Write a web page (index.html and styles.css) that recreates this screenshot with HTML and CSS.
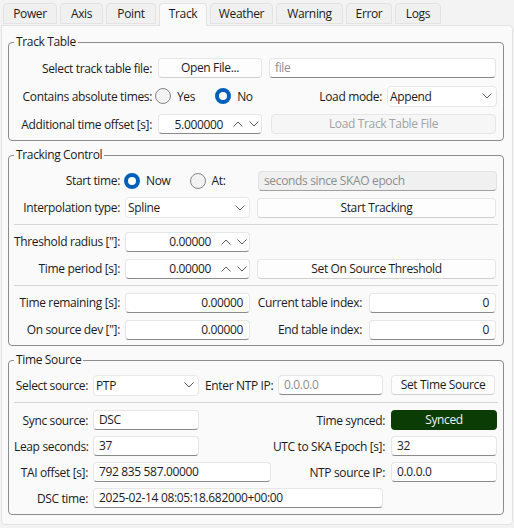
FILE: index.html
```html
<!DOCTYPE html>
<html>
<head>
<meta charset="utf-8">
<link rel="stylesheet" href="styles.css">
</head>
<body>
<div class="tabs">
  <div class="tab">Power</div>
  <div class="tab">Axis</div>
  <div class="tab">Point</div>
  <div class="tab active">Track</div>
  <div class="tab">Weather</div>
  <div class="tab">Warning</div>
  <div class="tab">Error</div>
  <div class="tab">Logs</div>
</div>
<div class="panel">
  <fieldset class="group g-table">
    <legend>Track Table</legend>
    <div class="rows r22">
      <div class="row">
        <span class="lbl w138">Select track table file:</span>
        <span class="btn w104 ml6">Open File...</span>
        <span class="edit ph w227 ml7">file</span>
      </div>
      <div class="row">
        <span class="lbl w138">Contains absolute times:</span>
        <span class="opt ml3"><span class="radio"></span><span>Yes</span></span>
        <span class="opt ml20"><span class="radio on"></span><span>No</span></span>
        <span class="lbl flex">Load mode:</span>
        <span class="combo w110 ml5"><span>Append</span><svg class="chev" width="10" height="6" viewBox="0 0 10 6"><polyline points="0.5,0.5 5,5 9.5,0.5"/></svg></span>
      </div>
      <div class="row">
        <span class="lbl w138">Additional time offset [s]:</span>
        <span class="spin w104 ml6"><span class="val">5.000000</span><span class="arrows"><svg width="10" height="6" viewBox="0 0 10 6"><polyline points="0.5,5.5 5,1 9.5,5.5"/></svg><svg width="10" height="6" viewBox="0 0 10 6"><polyline points="0.5,0.5 5,5 9.5,0.5"/></svg></span></span>
        <span class="btn dis w225 ml9">Load Track Table File</span>
      </div>
    </div>
  </fieldset>

  <fieldset class="group g-ctrl">
    <legend>Tracking Control</legend>
    <div class="rows">
      <div class="row">
        <span class="lbl w106">Start time:</span>
        <span class="opt ml4"><span class="radio on"></span><span>Now</span></span>
        <span class="opt ml19"><span class="radio"></span><span>At:</span></span>
        <span class="flex"></span>
        <span class="edit dis w239">seconds since SKAO epoch</span>
      </div>
      <div class="row">
        <span class="lbl w106">Interpolation type:</span>
        <span class="combo w125 ml5"><span>Spline</span><svg class="chev" width="10" height="6" viewBox="0 0 10 6"><polyline points="0.5,0.5 5,5 9.5,0.5"/></svg></span>
        <span class="btn w239 ml7">Start Tracking</span>
      </div>
      <div class="sep"></div>
      <div class="row">
        <span class="lbl w106">Threshold radius ["]:</span>
        <span class="spin w125 ml5"><span class="val">0.00000</span><span class="arrows"><svg width="10" height="6" viewBox="0 0 10 6"><polyline points="0.5,5.5 5,1 9.5,5.5"/></svg><svg width="10" height="6" viewBox="0 0 10 6"><polyline points="0.5,0.5 5,5 9.5,0.5"/></svg></span></span>
      </div>
      <div class="row">
        <span class="lbl w106">Time period [s]:</span>
        <span class="spin w125 ml5"><span class="val">0.00000</span><span class="arrows"><svg width="10" height="6" viewBox="0 0 10 6"><polyline points="0.5,5.5 5,1 9.5,5.5"/></svg><svg width="10" height="6" viewBox="0 0 10 6"><polyline points="0.5,0.5 5,5 9.5,0.5"/></svg></span></span>
        <span class="btn w239 ml7">Set On Source Threshold</span>
      </div>
      <div class="sep"></div>
      <div class="row">
        <span class="lbl w106">Time remaining [s]:</span>
        <span class="edit right w125 ml5">0.00000</span>
        <span class="lbl w105 ml7">Current table index:</span>
        <span class="edit right w127 ml7">0</span>
      </div>
      <div class="row">
        <span class="lbl w106">On source dev ["]:</span>
        <span class="edit right w125 ml5">0.00000</span>
        <span class="lbl w105 ml7">End table index:</span>
        <span class="edit right w127 ml7">0</span>
      </div>
    </div>
  </fieldset>

  <fieldset class="group g-time">
    <legend>Time Source</legend>
    <div class="rows r20">
      <div class="row">
        <span class="lbl w74">Select source:</span>
        <span class="combo w106 ml5"><span>PTP</span><svg class="chev" width="10" height="6" viewBox="0 0 10 6"><polyline points="0.5,0.5 5,5 9.5,0.5"/></svg></span>
        <span class="lbl w68 ml6">Enter NTP IP:</span>
        <span class="edit ph w105 ml5">0.0.0.0</span>
        <span class="btn w104 ml8">Set Time Source</span>
      </div>
      <div class="sep sep-ts"></div>
      <div class="row">
        <span class="lbl w74">Sync source:</span>
        <span class="edit w106 ml5">DSC</span>
        <span class="lbl flex">Time synced:</span>
        <span class="synced w106 ml6">Synced</span>
      </div>
      <div class="row">
        <span class="lbl w74">Leap seconds:</span>
        <span class="edit w106 ml5">37</span>
        <span class="lbl flex">UTC to SKA Epoch [s]:</span>
        <span class="edit w106 ml6">32</span>
      </div>
      <div class="row">
        <span class="lbl w74">TAI offset [s]:</span>
        <span class="edit w178 ml5">792 835 587.00000</span>
        <span class="lbl flex">NTP source IP:</span>
        <span class="edit w106 ml6">0.0.0.0</span>
      </div>
      <div class="row">
        <span class="lbl w74">DSC time:</span>
        <span class="edit w290 ml5">2025-02-14 08:05:18.682000+00:00</span>
      </div>
    </div>
  </fieldset>
</div>
</body>
</html>
```
FILE: styles.css
```css
* { box-sizing: border-box; }
html, body { margin: 0; padding: 0; }
body {
  width: 514px;
  height: 528px;
  overflow: hidden;
  background: #f3f3f3;
  font-family: "Open Sans", "Noto Sans", sans-serif;
  font-size: 12px;
  letter-spacing: -0.35px;
  color: #1b1b1b;
}

.tabs {
  display: flex;
  gap: 3px;
  padding: 3px 0 0 3px;
  height: 25px;
}
.tab {
  height: 21px;
  background: #f0f0f0;
  border: 1px solid #e3e3e3;
  border-radius: 4px 4px 0 0;
  text-align: center;
  line-height: 19px;
}
.tab.active {
  background: #fafafa;
  height: 23px;
  border-bottom: none;
  position: relative;
  z-index: 1;
}
.tab:nth-child(1) { width: 54px; }
.tab:nth-child(2) { width: 43px; }
.tab:nth-child(3) { width: 50px; }
.tab:nth-child(4) { width: 48px; }
.tab:nth-child(5) { width: 63px; }
.tab:nth-child(6) { width: 67px; }
.tab:nth-child(7) { width: 46px; }
.tab:nth-child(8) { width: 46px; }

.panel {
  margin: 0 1px;
  width: 512px;
  height: 500px;
  background: #fafafa;
  border: 1px solid #e3e3e3;
  border-radius: 0 4px 4px 4px;
  padding: 8px 0 0 6px;
}

.group {
  width: 496px;
  margin: 0 0 6px 0;
  border: 1px solid #8c8c8c;
  border-radius: 4px;
  padding: 7px 6px 5px 5px;
  min-width: 0;
}
.group legend {
  padding: 0 2px;
  line-height: 16px;
  font-size: 12px;
}
.g-ctrl { padding-bottom: 5px; }
.g-time { padding-top: 7px; padding-bottom: 6px; }

.rows { display: flex; flex-direction: column; gap: 6px; }
.rows.r22 { gap: 6px; }
.row { display: flex; align-items: center; height: 21px; white-space: nowrap; }
.r22 .row { height: 22px; }
.r20 .row { height: 20px; }

.sep { height: 1px; background: #d6d6d6; margin-right: -1px; }
.sep-ts { margin-top: 1px; margin-bottom: 1px; }

.lbl { text-align: right; flex: none; }
.lbl.flex, .flex { flex: 1; }

.w68 { width: 68px; } .w74 { width: 74px; } .w104 { width: 104px; } .w105 { width: 105px; }
.w106 { width: 106px; } .w110 { width: 110px; } .w125 { width: 125px; } .w127 { width: 127px; }
.w138 { width: 138px; } .w178 { width: 178px; } .w225 { width: 225px; } .w227 { width: 227px; }
.w239 { width: 239px; } .w290 { width: 290px; }
.ml3 { margin-left: 3px; } .ml4 { margin-left: 4px; } .ml5 { margin-left: 5px; } .ml6 { margin-left: 6px; }
.ml7 { margin-left: 7px; } .ml8 { margin-left: 8px; } .ml9 { margin-left: 9px; }
.ml19 { margin-left: 19px; } .ml20 { margin-left: 20px; }

.edit, .btn, .spin, .combo, .synced { flex: none; border-radius: 4px; }

.edit {
  height: 20px;
  background: #ffffff;
  border: 1px solid #e6e6e6;
  border-bottom-color: #8a8a8a;
  padding: 0 6px 0 5px;
  line-height: 18px;
  overflow: hidden;
}
.edit.right { text-align: right; }
.edit.ph { color: #8d8d8d; }
.edit.dis { background: #f0f0f0; color: #8d8d8d; border-color: #e3e3e3; border-bottom-color: #a0a0a0; }

.btn {
  height: 20px;
  background: #fdfdfd;
  border: 1px solid #e6e6e6;
  border-bottom-color: #cfcfcf;
  text-align: center;
  line-height: 18px;
}
.btn.dis { background: #f6f6f6; color: #a2a2a2; border-color: #e6e6e6; }

.combo {
  height: 21px;
  background: #ffffff;
  border: 1px solid #e8e8e8;
  display: flex;
  align-items: center;
  justify-content: space-between;
  padding: 0 4px 0 2px;
}
.chev polyline, .arrows polyline { fill: none; stroke: #5c5c5c; stroke-width: 1; }

.spin {
  height: 20px;
  background: #ffffff;
  border: 1px solid #e6e6e6;
  border-bottom-color: #8a8a8a;
  display: flex;
  align-items: center;
}
.spin .val { flex: 1; text-align: right; padding-right: 10px; }
.spin .arrows { display: flex; gap: 6px; padding-right: 2px; }

.synced {
  height: 20px;
  background: #0c3c06;
  color: #f2f2f2;
  text-align: center;
  line-height: 20px;
}

.opt { display: flex; align-items: center; gap: 6px; flex: none; }
.radio {
  width: 16px;
  height: 16px;
  border-radius: 50%;
  border: 1px solid #868686;
  background: #f2f2f2;
  flex: none;
}
.radio.on {
  border: 4px solid #005fb8;
  background: #ffffff;
}
```
